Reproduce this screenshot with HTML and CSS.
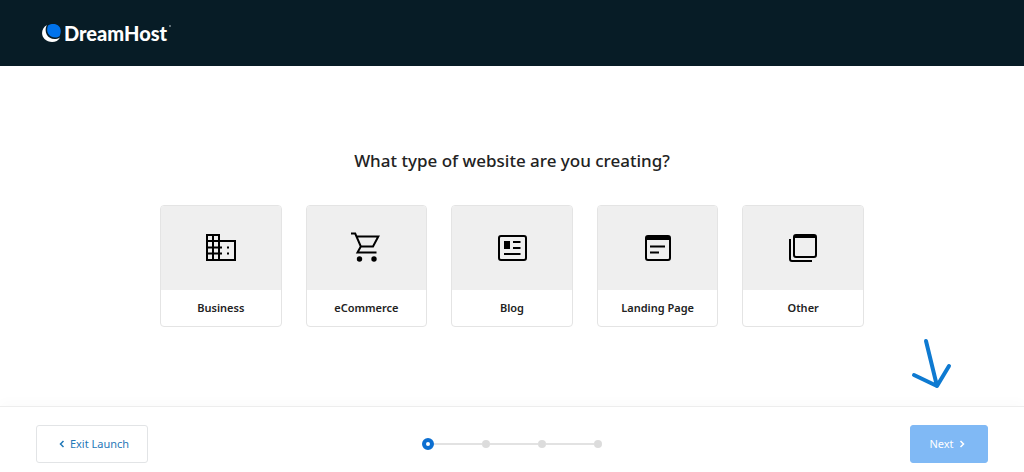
FILE: index.html
```html
<!DOCTYPE html>
<html lang="en">
<head>
    <meta charset="UTF-8">
    <meta name="viewport" content="width=device-width, initial-scale=1.0">
    <title>DreamHost</title>
    <link rel="stylesheet" href="styles.css">
</head>
<body>
    <header class="header">
        <a class="logo" href="#">
            <svg class="logo-mark" viewBox="0 0 20 20" aria-hidden="true">
                <path fill="#fff" d="M5 2C-.5 5-1.500 12 2.500 16C7 20.500 15.500 20 18 14.500C13 17.500 7 16 4.700 11.500C3 8 3.500 4.500 5 2Z"/>
                <path fill="#0073ec" d="M6.300 2.200C9 .7 13 .3 15.800 2.300C19 4.600 19.600 9 17.600 13.200C14.500 15.200 9.500 14.800 7 11.800C4.700 9.200 4.700 5 6.300 2.200Z"/>
            </svg>
            <span class="logo-text">DreamHost</span>
            <span class="logo-reg"></span>
        </a>
    </header>

    <main class="main">
        <h1>What type of website are you creating?</h1>
        <div class="cards">
            <button type="button" class="card">
                <span class="card-icon">
                    <svg viewBox="0 0 32 32" aria-hidden="true">
                        <path class="line" d="M2 3H14V28H2Z M8 3V28 M2 9H14 M2 15.500H17 M2 21.500H17 M14 9H30V28H14"/>
                        <path d="M22 14.500h2v2h-2z M22 20.500h2v2h-2z"/>
                    </svg>
                </span>
                <span class="card-label">Business</span>
            </button>
            <button type="button" class="card">
                <span class="card-icon">
                    <svg viewBox="0 0 32 32" aria-hidden="true">
                        <path class="line" d="M1 1.500H5.200L10.800 14.500H23L28.300 4.500H6.500 M10.800 14.500L7.500 20.500H26.500"/>
                        <circle cx="9.500" cy="27" r="2.700"/>
                        <circle cx="24" cy="27" r="2.700"/>
                    </svg>
                </span>
                <span class="card-label">eCommerce</span>
            </button>
            <button type="button" class="card">
                <span class="card-icon">
                    <svg viewBox="0 0 32 32" aria-hidden="true">
                        <rect class="line" x="3" y="4" width="27" height="24" rx="2"/>
                        <path d="M8 9h6v8H8z"/>
                        <path class="line" d="M17 10H24.500 M17 16H24.500 M8 22H24.500"/>
                    </svg>
                </span>
                <span class="card-label">Blog</span>
            </button>
            <button type="button" class="card">
                <span class="card-icon">
                    <svg viewBox="0 0 32 32" aria-hidden="true">
                        <rect class="line" x="4" y="4" width="24" height="24" rx="2"/>
                        <path d="M4 4h24v4H4z"/>
                        <path class="line" d="M8 14.500H23 M8 20.500H17"/>
                    </svg>
                </span>
                <span class="card-label">Landing Page</span>
            </button>
            <button type="button" class="card">
                <span class="card-icon">
                    <svg viewBox="0 0 32 32" aria-hidden="true">
                        <rect class="line" x="7" y="3" width="22" height="22" rx="2"/>
                        <path d="M7 3h22v3H7z"/>
                        <path class="line" d="M3 7V27Q3 29 5 29H25"/>
                    </svg>
                </span>
                <span class="card-label">Other</span>
            </button>
        </div>
    </main>

    <footer class="footer">
        <button type="button" class="btn btn-exit">
            <svg class="chevron" viewBox="0 0 6 8" aria-hidden="true"><path d="M4.500 1L1.500 4L4.500 7"/></svg>
            Exit Launch
        </button>
        <ol class="steps">
            <li class="step active"></li>
            <li class="step"></li>
            <li class="step"></li>
            <li class="step"></li>
        </ol>
        <button type="button" class="btn btn-next">
            Next
            <svg class="chevron" viewBox="0 0 6 8" aria-hidden="true"><path d="M1.500 1L4.500 4L1.500 7"/></svg>
        </button>
        <svg class="arrow" viewBox="0 0 42 52" aria-hidden="true"><path d="M15 3L26 48 M3 37L26 48L38 28"/></svg>
    </footer>
</body>
</html>
```

FILE: styles.css
```css
* {
    box-sizing: border-box;
}

body {
    display: flex;
    flex-direction: column;
    min-height: 100vh;
    margin: 0;
    background-color: #fff;
    color: #222;
    font-family: "Noto Sans", sans-serif;
    font-size: 11px;
}

.header {
    display: flex;
    align-items: center;
    height: 66px;
    padding: 0 42px;
    background-color: #071c26;
}

.logo {
    display: flex;
    align-items: center;
    gap: 2px;
    color: #fff;
    text-decoration: none;
}

.logo-mark {
    width: 20px;
    height: 20px;
}

.logo-text {
    font-family: Lato, sans-serif;
    font-size: 20px;
    font-weight: 900;
    line-height: 24px;
}

.logo-reg {
    align-self: flex-start;
    width: 2px;
    height: 2px;
    margin-top: 4px;
    border-radius: 50%;
    background-color: #7d898f;
}

.main {
    flex: 1;
    display: flex;
    flex-direction: column;
    align-items: center;
    justify-content: center;
    padding: 12px 24px 8px;
}

h1 {
    margin: 0 0 32px;
    font-size: 17px;
    font-weight: 500;
    line-height: 24px;
}

.cards {
    display: grid;
    grid-template-columns: repeat(5, 1fr);
    gap: 24px;
    width: 100%;
    max-width: 704px;
}

button {
    font-family: inherit;
    cursor: pointer;
}

.card {
    display: flex;
    flex-direction: column;
    padding: 0;
    overflow: hidden;
    background-color: #fff;
    border: 1px solid #e4e4e4;
    border-radius: 4px;
    color: #222;
    font-size: 11px;
    font-weight: 600;
}

.card-icon {
    display: flex;
    align-items: center;
    justify-content: center;
    width: 100%;
    height: 84px;
    background-color: #efefef;
}

.card-icon svg {
    width: 32px;
    height: 32px;
}

.line {
    fill: none;
    stroke: #000;
    stroke-width: 2;
}

.card-label {
    width: 100%;
    line-height: 36px;
    text-align: center;
}

.footer {
    position: relative;
    display: grid;
    grid-template-columns: 1fr auto 1fr;
    align-items: center;
    height: 66px;
    padding: 8px 36px 0;
    border-top: 1px solid #ededed;
    box-shadow: 0 -4px 12px rgba(0, 0, 0, 0.02);
}

.btn {
    display: flex;
    align-items: center;
    justify-content: center;
    gap: 5px;
    height: 38px;
    border: 1px solid #e2e4e6;
    border-radius: 3px;
    font-size: 11px;
}

.btn-exit {
    width: 112px;
    padding: 0 0 0 4px;
    background-color: #fff;
    color: #1f78b8;
}

.btn-next {
    justify-self: end;
    width: 78px;
    padding: 0 4px 0 0;
    background-color: #80b9f5;
    border-color: #80b9f5;
    color: #fff;
}

.chevron {
    width: 6px;
    height: 8px;
    fill: none;
    stroke: currentColor;
    stroke-width: 1.5;
}

.steps {
    display: flex;
    align-items: center;
    margin: 0;
    padding: 0;
    list-style: none;
}

.step {
    display: flex;
    align-items: center;
}

.step::before {
    content: "";
    width: 48px;
    height: 2px;
    background-color: #e2e2e2;
}

.step::after {
    content: "";
    width: 8px;
    height: 8px;
    border-radius: 50%;
    background-color: #dcdcdc;
}

.step.active::before {
    display: none;
}

.step.active::after {
    width: 12px;
    height: 12px;
    box-sizing: border-box;
    border: 4px solid #0c6fd1;
    background-color: #fff;
}

/* Arrow pointing at the Next button */
.arrow {
    position: absolute;
    right: 71px;
    bottom: 82px;
    width: 42px;
    height: 52px;
    fill: none;
    stroke: #0e7ad1;
    stroke-width: 4;
    stroke-linecap: round;
    stroke-linejoin: round;
}
```
